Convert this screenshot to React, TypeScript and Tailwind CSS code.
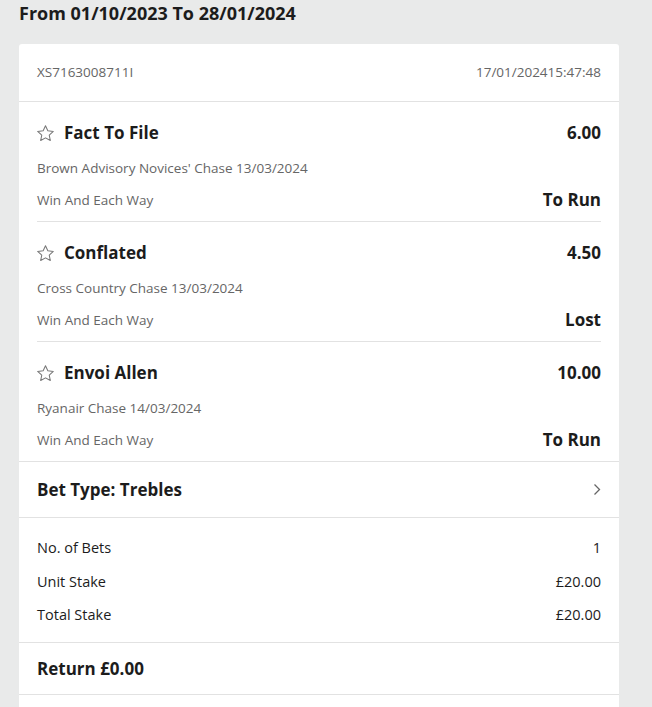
import React from 'react';

type Selection = {
  name: string;
  price: string;
  event: string;
  market: string;
  status: string;
};

const selections: Selection[] = [
  {
    name: 'Fact To File',
    price: '6.00',
    event: "Brown Advisory Novices' Chase 13/03/2024",
    market: 'Win And Each Way',
    status: 'To Run',
  },
  {
    name: 'Conflated',
    price: '4.50',
    event: 'Cross Country Chase 13/03/2024',
    market: 'Win And Each Way',
    status: 'Lost',
  },
  {
    name: 'Envoi Allen',
    price: '10.00',
    event: 'Ryanair Chase 14/03/2024',
    market: 'Win And Each Way',
    status: 'To Run',
  },
];

const StarIcon = () => (
  <svg width="17" height="17" viewBox="2 2.2 20 19.4" fill="none" stroke="#777" strokeWidth="1.2" strokeLinejoin="round">
    <path d="M12 2.8l2.75 5.9 6.45.75-4.8 4.4 1.3 6.35L12 17l-5.7 3.2 1.3-6.35-4.8-4.4 6.45-.75z" />
  </svg>
);

const ChevronRight = () => (
  <svg width="8" height="13" viewBox="0 0 8 13" fill="none" stroke="#666" strokeWidth="1.3">
    <path d="M1.5 1.5l5 5-5 5" />
  </svg>
);

const SelectionRow = ({ sel, last }: { sel: Selection; last: boolean }) => (
  <div className="px-[18px]">
    <div className={`flex flex-col ${last ? 'h-[119px]' : 'h-[120px] border-b border-[#e2e2e2]'}`}>
      <div className="flex items-center justify-between pt-[16px] h-[46px]">
        <div className="flex items-center gap-[10px]">
          <StarIcon />
          <span className="text-[17px] font-bold text-[#1c1c1c]">{sel.name}</span>
        </div>
        <span className="text-[17px] font-bold text-[#1c1c1c]">{sel.price}</span>
      </div>
      <div className="mt-[11px] text-[13.5px] text-[#666] leading-[18px]">{sel.event}</div>
      <div className="flex items-center justify-between mt-[10px]">
        <span className="text-[13.5px] text-[#666] pt-[1px]">{sel.market}</span>
        <span className="text-[17px] font-bold text-[#1c1c1c]">{sel.status}</span>
      </div>
    </div>
  </div>
);

export default function App() {
  return (
    <div
      className="min-h-[707px] bg-[#e9eaea] px-[19px] pb-4"
      style={{ fontFamily: '"Open Sans", "Noto Sans", sans-serif' }}
    >
      {/* date range heading */}
      <h1 className="pt-[1px] h-[44px] text-[18px] font-bold text-[#1c1c1c] leading-[24px]">
        From 01/10/2023 To 28/01/2024
      </h1>

      <div className="w-[600px] bg-white rounded-t-[3px]">
        {/* slip reference + placed time */}
        <div className="flex items-center justify-between px-[18px] h-[58px] border-b border-[#e2e2e2] text-[13.5px] text-[#666]">
          <span>XS7163008711I</span>
          <span>17/01/202415:47:48</span>
        </div>

        {selections.map((s, i) => (
          <SelectionRow key={s.name} sel={s} last={i === selections.length - 1} />
        ))}

        {/* bet type */}
        <div className="flex items-center justify-between px-[18px] h-[57px] border-t border-b border-[#e2e2e2]">
          <span className="text-[17px] font-bold text-[#1c1c1c]">Bet Type: Trebles</span>
          <ChevronRight />
        </div>

        {/* stake summary */}
        <div className="flex flex-col px-[18px] pt-[19px] pb-[16px] gap-[11.5px] text-[14.5px] text-[#1c1c1c] border-b border-[#e2e2e2]">
          <div className="flex justify-between leading-[22px]">
            <span>No. of Bets</span>
            <span>1</span>
          </div>
          <div className="flex justify-between leading-[22px]">
            <span>Unit Stake</span>
            <span>£20.00</span>
          </div>
          <div className="flex justify-between leading-[22px]">
            <span>Total Stake</span>
            <span>£20.00</span>
          </div>
        </div>

        {/* return */}
        <div className="flex items-center px-[18px] h-[52px] border-b border-[#e2e2e2]">
          <span className="text-[17px] font-bold text-[#1c1c1c]">Return £0.00</span>
        </div>
        <div className="h-[40px]" />
      </div>
    </div>
  );
}
